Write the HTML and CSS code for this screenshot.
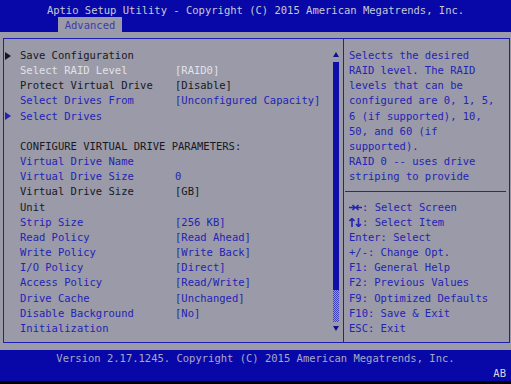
FILE: index.html
```html
<!DOCTYPE html>
<html>
<head>
<meta charset="utf-8">
<link rel="stylesheet" href="styles.css">
</head>
<body>
<div class="screen">
  <header class="top">
    <div class="title">Aptio Setup Utility - Copyright (C) 2015 American Megatrends, Inc.</div>
    <div class="tabs"><span class="tab">Advanced</span></div>
  </header>
  <main class="main">
    <div class="frame">
      <section class="menu">
        <div class="items">
          <div class="row black"><span class="arr"><svg width="6" height="8" viewBox="0 0 6 8"><path d="M0 0 L6 4 L0 8 Z"/></svg></span><span>Save Configuration</span><span></span></div>
          <div class="row white"><span></span><span>Select RAID Level</span><span>[RAID0]</span></div>
          <div class="row black"><span></span><span>Protect Virtual Drive</span><span>[Disable]</span></div>
          <div class="row blue"><span></span><span>Select Drives From</span><span>[Unconfigured Capacity]</span></div>
          <div class="row blue"><span class="arr"><svg width="6" height="8" viewBox="0 0 6 8"><path d="M0 0 L6 4 L0 8 Z"/></svg></span><span>Select Drives</span><span></span></div>
          <div class="row"></div>
          <div class="row black"><span></span><span class="wide">CONFIGURE VIRTUAL DRIVE PARAMETERS:</span></div>
          <div class="row blue"><span></span><span>Virtual Drive Name</span><span></span></div>
          <div class="row blue"><span></span><span>Virtual Drive Size</span><span>0</span></div>
          <div class="row black"><span></span><span>Virtual Drive Size</span><span>[GB]</span></div>
          <div class="row black"><span></span><span>Unit</span><span></span></div>
          <div class="row blue"><span></span><span>Strip Size</span><span>[256 KB]</span></div>
          <div class="row blue"><span></span><span>Read Policy</span><span>[Read Ahead]</span></div>
          <div class="row blue"><span></span><span>Write Policy</span><span>[Write Back]</span></div>
          <div class="row blue"><span></span><span>I/O Policy</span><span>[Direct]</span></div>
          <div class="row blue"><span></span><span>Access Policy</span><span>[Read/Write]</span></div>
          <div class="row blue"><span></span><span>Drive Cache</span><span>[Unchanged]</span></div>
          <div class="row blue"><span></span><span>Disable Background</span><span>[No]</span></div>
          <div class="row blue"><span></span><span>Initialization</span><span></span></div>
        </div>
        <div class="scroll">
          <svg class="sarrow" width="6" height="5" viewBox="0 0 6 5"><path d="M3 0 L6 5 L0 5 Z"/></svg>
          <div class="track">
            <div class="thumb"></div>
            <div class="dots"></div>
          </div>
          <svg class="sarrow down" width="6" height="5" viewBox="0 0 6 5"><path d="M0 0 L6 0 L3 5 Z"/></svg>
        </div>
      </section>
      <aside class="help">
        <div class="hl">Selects the desired</div>
        <div class="hl">RAID level. The RAID</div>
        <div class="hl">levels that can be</div>
        <div class="hl">configured are 0, 1, 5,</div>
        <div class="hl">6 (if supported), 10,</div>
        <div class="hl">50, and 60 (if</div>
        <div class="hl">supported).</div>
        <div class="hl">RAID 0 -- uses drive</div>
        <div class="hl">striping to provide</div>
        <div class="sep"></div>
        <div class="hl"><svg class="k" width="13" height="9" viewBox="0 0 13 9"><path d="M0 4.5 H6 M3.5 2 L6 4.5 L3.5 7 M7 4.5 H13 M9.5 2 L7 4.5 L9.5 7"/></svg>: Select Screen</div>
        <div class="hl"><svg class="k" width="13" height="9" viewBox="0 0 13 9"><path d="M3 0.5 V9 M0.5 3 L3 0.5 L5.5 3 M9.5 0 V8.5 M7 6 L9.5 8.5 L12 6"/></svg>: Select Item</div>
        <div class="hl">Enter: Select</div>
        <div class="hl">+/-: Change Opt.</div>
        <div class="hl">F1: General Help</div>
        <div class="hl">F2: Previous Values</div>
        <div class="hl">F9: Optimized Defaults</div>
        <div class="hl">F10: Save &amp; Exit</div>
        <div class="hl">ESC: Exit</div>
      </aside>
    </div>
  </main>
  <footer class="bottom">
    <div class="ver">Version 2.17.1245. Copyright (C) 2015 American Megatrends, Inc.</div>
    <div class="ab">AB</div>
  </footer>
</div>
</body>
</html>
```
FILE: styles.css
```css
html, body {
  margin: 0;
  padding: 0;
}
body {
  background: #000;
  width: 511px;
  height: 384px;
  overflow: hidden;
  font-family: "DejaVu Sans Mono", "Liberation Mono", monospace;
  font-size: 10.5px;
}
.screen {
  display: flex;
  flex-direction: column;
  height: 381px;
}
.top {
  background: #0808a8;
  height: 32px;
  display: flex;
  flex-direction: column;
}
.title {
  height: 17px;
  line-height: 20px;
  color: #c8c8d4;
  text-align: center;
  white-space: pre;
}
.tabs {
  height: 15px;
  padding-left: 58px;
}
.tab {
  display: inline-block;
  width: 64px;
  height: 15px;
  line-height: 16px;
  background: #9a9aa8;
  color: #3c3ca8;
  text-align: center;
}
.main {
  background: #9a9aa8;
  height: 318px;
  box-sizing: border-box;
  padding: 6px 1px 0 3px;
}
.frame {
  height: 305px;
  box-sizing: border-box;
  border: 1px solid #2020b0;
  display: flex;
}
.menu {
  width: 339px;
  border-right: 1px solid #2020b0;
  display: flex;
}
.items {
  flex: 1;
  padding-top: 9px;
}
.row {
  display: grid;
  grid-template-columns: 16px 155px 1fr;
  height: 15.17px;
  line-height: 15.17px;
  white-space: pre;
}
.row .wide {
  grid-column: 2 / 4;
}
.arr {
  display: flex;
  align-items: center;
  padding-left: 1px;
}
.black { color: #18181f; }
.black svg { fill: #18181f; }
.white { color: #e2e2ea; }
.blue { color: #2424b4; }
.blue svg { fill: #2424b4; }
.scroll {
  width: 6px;
  margin-right: 4px;
  padding-top: 13px;
  display: flex;
  flex-direction: column;
}
.sarrow {
  display: block;
  fill: #10108c;
}
.track {
  margin-top: 5px;
  display: flex;
  flex-direction: column;
}
.thumb {
  height: 228px;
  background: #1010a8;
}
.dots {
  height: 32px;
  background: repeating-conic-gradient(#4040b8 0 25%, #9a9aa8 0 50%) 0 0 / 2px 2px;
}
.down {
  margin-top: 4px;
}
.help {
  flex: 1;
  padding: 9px 3px 0 5px;
  color: #2424b4;
}
.hl {
  height: 15.17px;
  line-height: 15.17px;
  white-space: pre;
}
.k {
  vertical-align: -1px;
  fill: none;
  stroke: #2424b4;
  stroke-width: 1.6;
}
.sep {
  height: 15.17px;
  display: flex;
  align-items: center;
  margin-left: -4px;
}
.sep::after {
  content: "";
  display: block;
  width: 161px;
  height: 1px;
  background: #2424b4;
}
.bottom {
  background: #0808a8;
  height: 31px;
  color: #a8a8c4;
}
.ver {
  height: 16px;
  line-height: 16px;
  text-align: center;
  white-space: pre;
}
.ab {
  height: 15px;
  line-height: 15px;
  text-align: right;
  padding-right: 5px;
  color: #d8d8e0;
}
```
